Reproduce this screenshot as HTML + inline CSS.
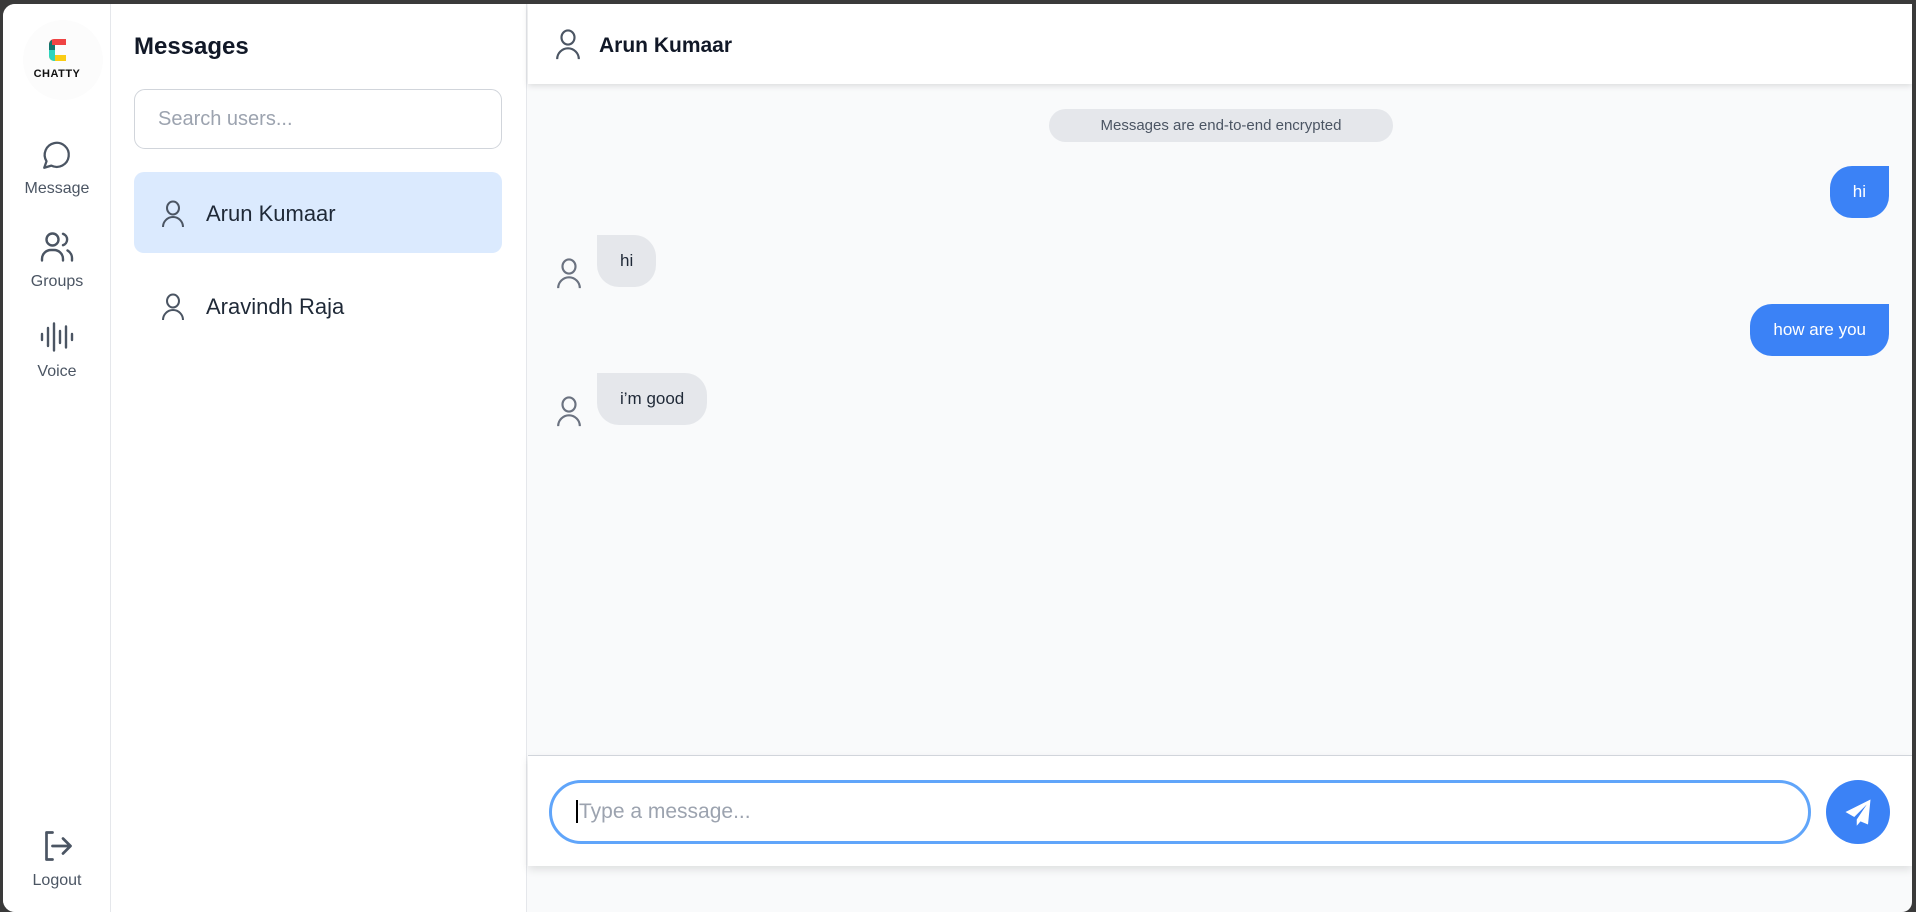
<!DOCTYPE html>
<html><head><meta charset="utf-8"><style>
*{box-sizing:border-box;margin:0;padding:0}
body{width:1916px;height:912px;background:#3a3a3a;font-family:"Liberation Sans",sans-serif;overflow:hidden;position:relative}
.win{position:absolute;left:3px;top:4px;width:1909px;height:908px;background:#f9fafb;border-radius:12px 0 10px 12px;overflow:hidden}
.side{position:absolute;left:0;top:0;width:108px;height:100%;background:#fff;border-right:1px solid #e5e7eb}
.nav{position:absolute;left:0;width:108px;text-align:center;color:#4b5563;font-size:16px}
.nav svg{display:block;margin:0 auto 8px}
.list{position:absolute;left:108px;top:0;width:416px;height:100%;background:#fff;border-right:1px solid #e5e7eb}
.chat{position:absolute;left:525px;top:0;right:0;height:100%}
.hdr{position:absolute;left:0;right:0;top:0;height:80px;background:#fff;box-shadow:0 2px 6px rgba(0,0,0,.12)}
.bub{position:absolute;height:52px;line-height:52px;padding:0 23px;font-size:17px;border-radius:22px}
.in{background:#e5e7eb;color:#1f2937;border-top-left-radius:0}
.out{background:#3b82f6;color:#fff;border-top-right-radius:0}
.av{position:absolute;left:28px}
</style></head><body>
<div class="win">
 <div class="side">
  <div style="position:absolute;left:20px;top:16px;width:80px;height:80px;border-radius:50%;background:#fcfcfc"></div>
  <svg style="position:absolute;left:46px;top:35px" width="17" height="22" viewBox="0 0 17 22">
   <path d="M5 0H17V6H6V11H0V5A5 5 0 0 1 5 0Z" fill="#ef4444"/>
   <path d="M3 1A5 5 0 0 0 0 5V11H6V6H3Z" fill="#0f766e"/>
   <path d="M0 16H6H17V22H5A5 5 0 0 1 0 17Z" fill="#facc15"/>
   <path d="M0 11V17A5 5 0 0 0 5 22H6V11Z" fill="#2dd4bf"/>
  </svg>
  <div style="position:absolute;left:0;width:108px;top:64px;text-align:center;font-size:11px;font-weight:bold;letter-spacing:.5px;color:#111">CHATTY</div>
  <div class="nav" style="top:134px"><svg width="34" height="34" viewBox="0 0 24 24" fill="none" stroke="#4b5563" stroke-width="1.6" stroke-linecap="round" stroke-linejoin="round"><path d="M3 21l1.6-4.6A8.5 8.5 0 1 1 8 19.5z"/></svg>Message</div>
  <div class="nav" style="top:225px"><svg width="36" height="36" viewBox="0 0 24 24" fill="none" stroke="#4b5563" stroke-width="1.6" stroke-linecap="round"><circle cx="9" cy="7" r="4"/><path d="M2 21v-1a6 6 0 0 1 6-6h2a6 6 0 0 1 6 6v1"/><path d="M16 3.2a4 4 0 0 1 0 7.6"/><path d="M19 14.3a6 6 0 0 1 3 5.7v1"/></svg>Groups</div>
  <div class="nav" style="top:315px"><svg width="36" height="36" viewBox="0 0 24 24" fill="none" stroke="#4b5563" stroke-width="1.6" stroke-linecap="round"><path d="M2 10v4M6 6v12M10 3v18M14 8v8M18 5v14M22 10v4"/></svg>Voice</div>
  <div class="nav" style="top:824px"><svg width="36" height="36" viewBox="0 0 24 24" fill="none" stroke="#4b5563" stroke-width="1.8" stroke-linecap="round" stroke-linejoin="round"><path d="M9 21H5V3h4"/><path d="M16 17l5-5-5-5M21 12H9"/></svg>Logout</div>
 </div>
 <div class="list">
  <div style="position:absolute;left:23px;top:29px;font-size:24px;font-weight:bold;color:#111827">Messages</div>
  <div style="position:absolute;left:23px;top:85px;width:368px;height:60px;border:1px solid #d1d5db;border-radius:11px;padding-left:23px;line-height:58px;font-size:20px;color:#9ca3af">Search users...</div>
  <div style="position:absolute;left:23px;top:168px;width:368px;height:81px;background:#dbeafe;border-radius:10px"></div>
  <svg style="position:absolute;left:50px;top:196px" width="24" height="28" viewBox="0 0 24 28" fill="none" stroke="#4b5563" stroke-width="2"><ellipse cx="12" cy="8" rx="6" ry="6.5"/><path d="M2 27a10 10 0 0 1 20 0"/></svg>
  <div style="position:absolute;left:95px;top:197px;font-size:22px;color:#1f2937">Arun Kumaar</div>
  <svg style="position:absolute;left:50px;top:289px" width="24" height="28" viewBox="0 0 24 28" fill="none" stroke="#4b5563" stroke-width="2"><ellipse cx="12" cy="8" rx="6" ry="6.5"/><path d="M2 27a10 10 0 0 1 20 0"/></svg>
  <div style="position:absolute;left:95px;top:290px;font-size:22px;color:#1f2937">Aravindh Raja</div>
 </div>
 <div class="chat">
  <div class="hdr">
   <svg style="position:absolute;left:27px;top:24px" width="26" height="32" viewBox="0 0 24 28" fill="none" stroke="#4b5563" stroke-width="2"><ellipse cx="12" cy="8" rx="6" ry="6.5"/><path d="M2 28a10 10 0 0 1 20 0"/></svg>
   <div style="position:absolute;left:71px;top:30px;font-size:21px;font-weight:bold;color:#111827">Arun Kumaar</div>
  </div>
  <div style="position:absolute;left:521px;top:105px;width:344px;height:33px;border-radius:17px;background:#e5e7eb;color:#4b5563;font-size:15px;text-align:center;line-height:33px">Messages are end-to-end encrypted</div>
  <div class="bub out" style="right:23px;top:162px">hi</div>
  <svg class="av" style="top:253px" width="26" height="32" viewBox="0 0 24 28" fill="none" stroke="#6b7280" stroke-width="2"><ellipse cx="12" cy="8" rx="6" ry="6.5"/><path d="M2 28a10 10 0 0 1 20 0"/></svg>
  <div class="bub in" style="left:69px;top:231px">hi</div>
  <div class="bub out" style="right:23px;top:300px">how are you</div>
  <svg class="av" style="top:391px" width="26" height="32" viewBox="0 0 24 28" fill="none" stroke="#6b7280" stroke-width="2"><ellipse cx="12" cy="8" rx="6" ry="6.5"/><path d="M2 28a10 10 0 0 1 20 0"/></svg>
  <div class="bub in" style="left:69px;top:369px">i’m good</div>
  <div style="position:absolute;left:0;right:0;top:751px;height:111px;background:#fff;border-top:1px solid #d1d5db;box-shadow:0 4px 8px rgba(0,0,0,.1)">
   <div style="position:absolute;left:21px;top:24px;width:1262px;height:64px;border:3px solid #60a5fa;border-radius:32px;padding-left:24px;line-height:58px;font-size:21px;color:#9ca3af"><span style="border-left:2px solid #000;padding-left:1px">Type a message...</span></div>
   <div style="position:absolute;left:1298px;top:24px;width:64px;height:64px;border-radius:50%;background:#3b82f6">
    <svg style="position:absolute;left:17px;top:17px" width="30" height="30" viewBox="0 0 24 24"><path d="M2 12L22 2 20 22 14 19.5 11 23 11 18 19 6 9 16Z" fill="#fff"/></svg>
   </div>
  </div>
 </div>
</div>
</body></html>
